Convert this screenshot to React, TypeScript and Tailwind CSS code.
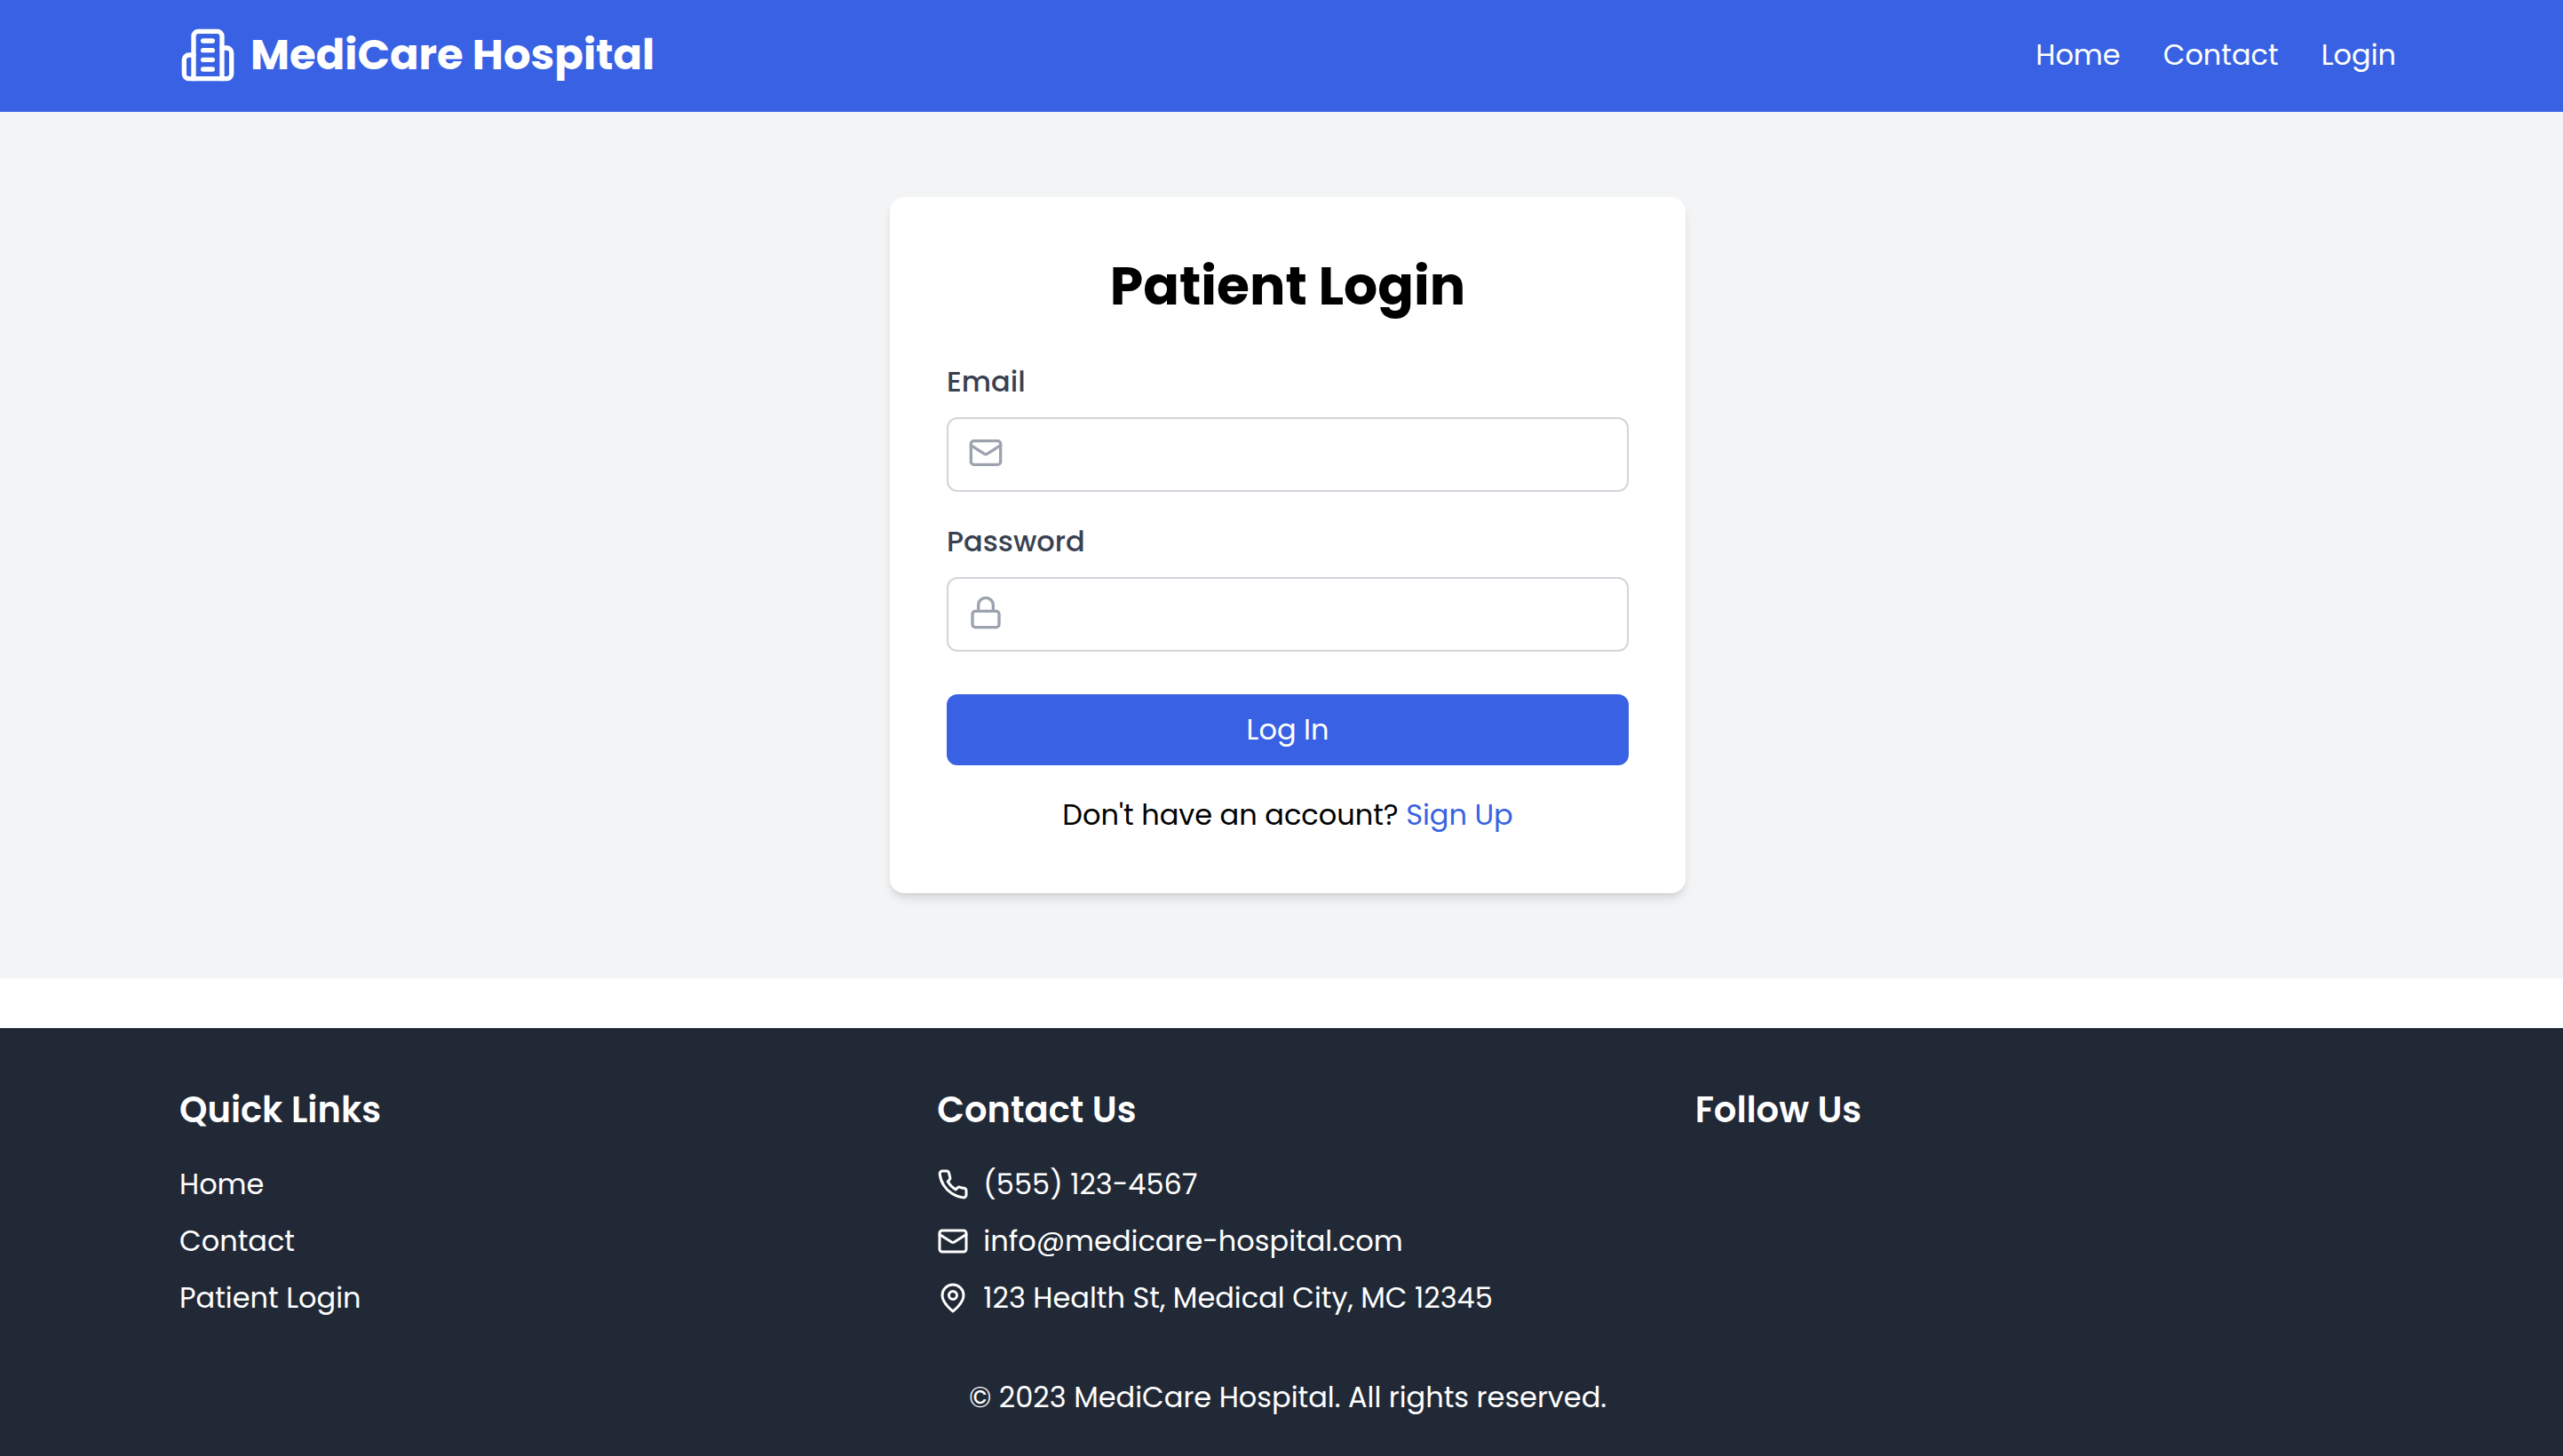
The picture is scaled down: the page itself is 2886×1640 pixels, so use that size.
import type { ReactNode } from "react";

type IconProps = { className: string; children: ReactNode };

function Icon({ className, children }: IconProps) {
  return (
    <svg
      viewBox="0 0 24 24"
      fill="none"
      stroke="currentColor"
      strokeWidth="2"
      strokeLinecap="round"
      strokeLinejoin="round"
      aria-hidden="true"
      className={className}
    >
      {children}
    </svg>
  );
}

function BuildingIcon({ className }: { className: string }) {
  return (
    <Icon className={className}>
      <path d="M6 22V4a2 2 0 0 1 2-2h8a2 2 0 0 1 2 2v18Z" />
      <path d="M6 12H4a2 2 0 0 0-2 2v6a2 2 0 0 0 2 2h2" />
      <path d="M18 9h2a2 2 0 0 1 2 2v9a2 2 0 0 1-2 2h-2" />
      <path d="M10 6h4" />
      <path d="M10 10h4" />
      <path d="M10 14h4" />
      <path d="M10 18h4" />
    </Icon>
  );
}

function MailIcon({ className }: { className: string }) {
  return (
    <Icon className={className}>
      <rect width="20" height="16" x="2" y="4" rx="2" />
      <path d="m22 7-8.97 5.7a1.94 1.94 0 0 1-2.06 0L2 7" />
    </Icon>
  );
}

function LockIcon({ className }: { className: string }) {
  return (
    <Icon className={className}>
      <rect width="18" height="11" x="3" y="11" rx="2" ry="2" />
      <path d="M7 11V7a5 5 0 0 1 10 0v4" />
    </Icon>
  );
}

function PhoneIcon({ className }: { className: string }) {
  return (
    <Icon className={className}>
      <path d="M22 16.92v3a2 2 0 0 1-2.18 2 19.79 19.79 0 0 1-8.63-3.07 19.5 19.5 0 0 1-6-6 19.79 19.79 0 0 1-3.07-8.67A2 2 0 0 1 4.11 2h3a2 2 0 0 1 2 1.72 12.84 12.84 0 0 0 .7 2.81 2 2 0 0 1-.45 2.11L8.09 9.91a16 16 0 0 0 6 6l1.27-1.27a2 2 0 0 1 2.11-.45 12.84 12.84 0 0 0 2.81.7A2 2 0 0 1 22 16.92z" />
    </Icon>
  );
}

function PinIcon({ className }: { className: string }) {
  return (
    <Icon className={className}>
      <path d="M20 10c0 6-8 12-8 12s-8-6-8-12a8 8 0 0 1 16 0Z" />
      <circle cx="12" cy="10" r="3" />
    </Icon>
  );
}

const navLinks = ["Home", "Contact", "Login"];
const quickLinks = ["Home", "Contact", "Patient Login"];

function Header() {
  return (
    <header className="bg-[#3862e3] pl-3.5 text-white">
      <div className="mx-auto flex max-w-[2560px] items-center justify-between px-8 pt-[30px] pb-8">
        <a href="#" className="flex items-center gap-4">
          <BuildingIcon className="size-16" />
          <span className="text-5xl leading-16 font-bold">MediCare Hospital</span>
        </a>
        <nav className="flex gap-12">
          {navLinks.map((label) => (
            <a key={label} href="#">
              {label}
            </a>
          ))}
        </nav>
      </div>
    </header>
  );
}

type FieldProps = { id: string; label: string; type: string; icon: ReactNode };

function Field({ id, label, type, icon }: FieldProps) {
  return (
    <div>
      <label htmlFor={id} className="mb-4 block font-medium text-[#394151]">
        {label}
      </label>
      <div className="relative">
        <input
          id={id}
          type={type}
          className="block w-full rounded-xl border-2 border-[#d2d5da] bg-white py-4 pr-6 pl-20 text-black"
        />
        <span className="pointer-events-none absolute top-5 left-6 text-[#9ca3af]">{icon}</span>
      </div>
    </div>
  );
}

function LoginCard() {
  return (
    <main className="bg-[#f3f4f6] py-24 pl-3.5">
      <div className="mx-auto max-w-4xl rounded-2xl bg-white p-16 shadow-[0_8px_12px_-2px_rgb(0_0_0/0.1),0_4px_8px_-4px_rgb(0_0_0/0.1)]">
        <h1 className="mb-12 text-center text-6xl leading-18 font-bold">Patient Login</h1>
        <form onSubmit={(event) => event.preventDefault()}>
          <div className="mb-12 flex flex-col gap-8">
            <Field id="email" label="Email" type="email" icon={<MailIcon className="size-10" />} />
            <Field id="password" label="Password" type="password" icon={<LockIcon className="size-10" />} />
          </div>
          <button type="submit" className="block w-full rounded-xl bg-[#3862e3] py-4 text-white">
            Log In
          </button>
        </form>
        <p className="mt-8 text-center">
          Don't have an account?{" "}
          <a href="#" className="text-[#3862e3]">
            Sign Up
          </a>
        </p>
      </div>
    </main>
  );
}

function FooterHeading({ children }: { children: ReactNode }) {
  return <h2 className="mb-8 text-[40px] leading-14 font-semibold">{children}</h2>;
}

function Footer() {
  return (
    <footer className="mt-14 grow bg-[#222936] pt-16 pl-3.5 text-white">
      <div className="mx-auto max-w-[2560px] px-8">
        <div className="grid grid-cols-3 gap-16">
          <div>
            <FooterHeading>Quick Links</FooterHeading>
            <ul className="flex flex-col gap-4">
              {quickLinks.map((label) => (
                <li key={label}>
                  <a href="#">{label}</a>
                </li>
              ))}
            </ul>
          </div>
          <div>
            <FooterHeading>Contact Us</FooterHeading>
            <ul className="flex flex-col gap-4">
              <li className="flex items-center gap-4">
                <PhoneIcon className="size-9" />
                <span>(555) 123-4567</span>
              </li>
              <li className="flex items-center gap-4">
                <MailIcon className="size-9" />
                <span>info@medicare-hospital.com</span>
              </li>
              <li className="flex items-center gap-4">
                <PinIcon className="size-9" />
                <span>123 Health St, Medical City, MC 12345</span>
              </li>
            </ul>
          </div>
          <div>
            <FooterHeading>Follow Us</FooterHeading>
          </div>
        </div>
        <p className="mt-16 text-center">© 2023 MediCare Hospital. All rights reserved.</p>
      </div>
    </footer>
  );
}

export default function App() {
  return (
    <div className="flex min-h-screen flex-col bg-white font-['Poppins','Inter',sans-serif] text-[32px] leading-12 text-black">
      <Header />
      <LoginCard />
      <Footer />
    </div>
  );
}
